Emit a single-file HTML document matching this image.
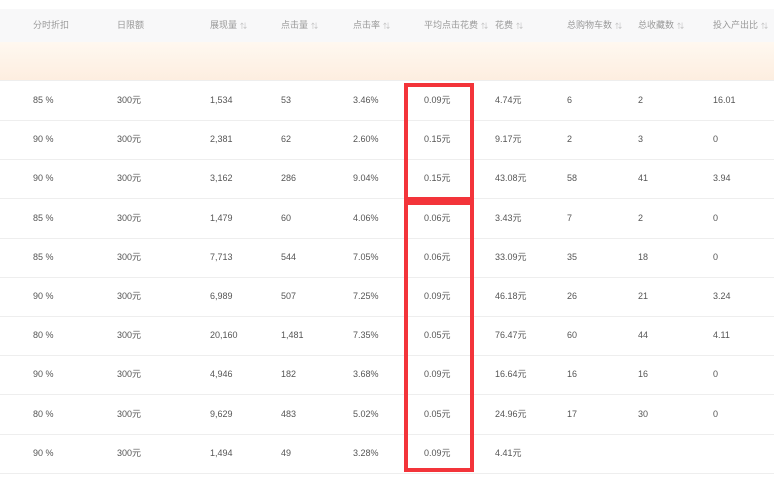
<!DOCTYPE html>
<html><head><meta charset="utf-8"><style>
body{margin:0;width:774px;height:486px;background:#fff;position:relative;overflow:hidden;font-family:"Liberation Sans","Noto Sans CJK SC",sans-serif;font-size:9px;color:#555}
.hd{position:absolute;left:0;top:9px;width:774px;height:33px;background:#f8f8f9}
.og{position:absolute;left:0;top:42px;width:774px;height:38px;background:linear-gradient(#fff8f0,#fdeee0);border-bottom:1px solid #eee}
.t{position:absolute;white-space:nowrap;line-height:12px;height:12px}
.h{color:#999;top:19px}
.h i{font-style:normal;font-size:7px;color:#bbb;margin-left:3px}
.ln{position:absolute;left:0;width:774px;height:1px;background:#eee}
.box{position:absolute;border:4px solid #f3343a;box-sizing:border-box}
</style></head><body>
<div class="hd"></div><div class="og"></div>
<div class="t h" style="left:33px">分时折扣</div>
<div class="t h" style="left:117px">日限额</div>
<div class="t h" style="left:210px">展现量<i>⇅</i></div>
<div class="t h" style="left:281px">点击量<i>⇅</i></div>
<div class="t h" style="left:353px">点击率<i>⇅</i></div>
<div class="t h" style="left:424px">平均点击花费<i>⇅</i></div>
<div class="t h" style="left:495px">花费<i>⇅</i></div>
<div class="t h" style="left:567px">总购物车数<i>⇅</i></div>
<div class="t h" style="left:638px">总收藏数<i>⇅</i></div>
<div class="t h" style="left:713px">投入产出比<i>⇅</i></div>
<div id="rows"></div>
<script>
var d=[["85 %","1,534","53","3.46%","0.09元","4.74元","6","2","16.01"],
["90 %","2,381","62","2.60%","0.15元","9.17元","2","3","0"],
["90 %","3,162","286","9.04%","0.15元","43.08元","58","41","3.94"],
["85 %","1,479","60","4.06%","0.06元","3.43元","7","2","0"],
["85 %","7,713","544","7.05%","0.06元","33.09元","35","18","0"],
["90 %","6,989","507","7.25%","0.09元","46.18元","26","21","3.24"],
["80 %","20,160","1,481","7.35%","0.05元","76.47元","60","44","4.11"],
["90 %","4,946","182","3.68%","0.09元","16.64元","16","16","0"],
["80 %","9,629","483","5.02%","0.05元","24.96元","17","30","0"],
["90 %","1,494","49","3.28%","0.09元","4.41元","","",""]];
var xs=[33,210,281,353,424,495,567,638,713],h="";
d.forEach(function(r,i){var y=Math.round(81+i*39.2);
h+='<div class="t" style="left:117px;top:'+(y+13)+'px">300元</div>';
r.forEach(function(v,j){h+='<div class="t" style="left:'+xs[j]+'px;top:'+(y+13)+'px">'+v+'</div>'});
h+='<div class="ln" style="top:'+Math.round(81+i*39.2+39)+'px"></div>';});
document.getElementById('rows').innerHTML=h;
</script>
<div class="box" style="left:404px;top:83px;width:70px;height:118px"></div>
<div class="box" style="left:404px;top:201px;width:70px;height:271px"></div>
</body></html>
